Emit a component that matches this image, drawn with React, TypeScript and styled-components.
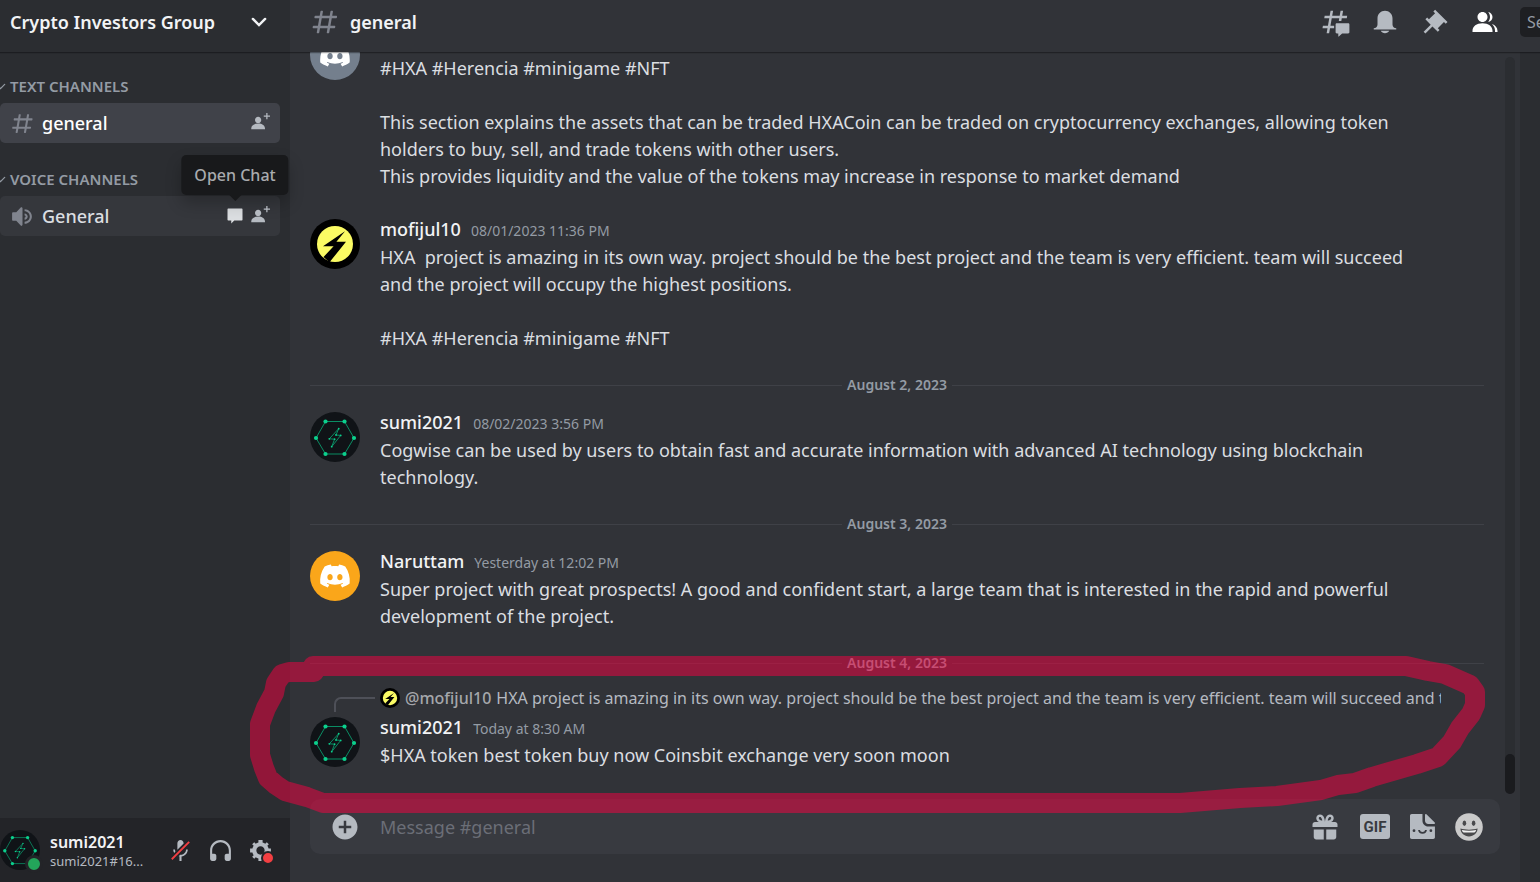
import React from 'react';
import styled, { createGlobalStyle, css } from 'styled-components';

const color = {
  chat: '#313338',
  side: '#2b2d31',
  panel: '#232428',
  dark: '#1e1f22',
  text: '#dbdee1',
  muted: '#949ba4',
  icon: '#b5bac1',
  hash: '#80848e',
  selected: '#404249',
  hover: '#35373c',
  composer: '#383a40',
  line: '#3f4147',
};

const GlobalStyle = createGlobalStyle`
  *, *::before, *::after { box-sizing: border-box; }
  body { margin: 0; background: ${color.chat}; }
  body, button, input { font-family: "Noto Sans", "Open Sans", sans-serif; }
  h1, h2, h3, p, ul, ol { margin: 0; padding: 0; list-style: none; }
  svg { display: block; flex: none; }
`;

/* ---------- icons ---------- */

type IconProps = { size: number; fill?: string };

const Icon = ({ size, fill = 'currentColor', d, box = '0 0 24 24' }: IconProps & { d: string; box?: string }) => (
  <svg width={size} height={size} viewBox={box} fill={fill} aria-hidden="true">
    <path fillRule="evenodd" clipRule="evenodd" d={d} />
  </svg>
);

const paths = {
  hash: 'M5.88657 21C5.57547 21 5.3399 20.7189 5.39427 20.4126L6.00001 17H2.59511C2.28449 17 2.04905 16.7198 2.10259 16.4138L2.27759 15.4138C2.31946 15.1746 2.52722 15 2.77011 15H6.35001L7.41001 9H4.00511C3.69449 9 3.45905 8.71977 3.51259 8.41381L3.68759 7.41381C3.72946 7.17456 3.93722 7 4.18011 7H7.76001L8.39677 3.41262C8.43914 3.17391 8.64664 3 8.88907 3H9.87344C10.1845 3 10.4201 3.28107 10.3657 3.58738L9.76001 7H15.76L16.3968 3.41262C16.4391 3.17391 16.6466 3 16.8891 3H17.8734C18.1845 3 18.4201 3.28107 18.3657 3.58738L17.76 7H21.1649C21.4755 7 21.711 7.28023 21.6574 7.58619L21.4824 8.58619C21.4406 8.82544 21.2328 9 20.9899 9H17.41L16.35 15H19.7549C20.0655 15 20.301 15.2802 20.2474 15.5862L20.0724 16.5862C20.0306 16.8254 19.8228 17 19.5799 17H16L15.3632 20.5874C15.3209 20.8261 15.1134 21 14.8709 21H13.8866C13.5755 21 13.3399 20.7189 13.3943 20.4126L14 17H8.00001L7.36325 20.5874C7.32088 20.8261 7.11337 21 6.87094 21H5.88657ZM9.41045 9L8.35045 15H14.3504L15.4104 9H9.41045Z',
  threads:
    'M5.43309 21C5.35842 21 5.30189 20.9325 5.31494 20.859L6 17H2.14274C2.06819 17 2.01168 16.9327 2.02453 16.8593L2.33253 15.0993C2.34258 15.0419 2.39244 15 2.45074 15H6.35L7.41 9H3.55274C3.47819 9 3.42168 8.93274 3.43453 8.85931L3.74253 7.09931C3.75258 7.04189 3.80244 7 3.86074 7H7.76L8.45234 3.09903C8.46251 3.04174 8.51231 3 8.57049 3H10.3267C10.4014 3 10.4579 3.06746 10.4449 3.14097L9.76 7H15.76L16.4523 3.09903C16.4625 3.04174 16.5123 3 16.5705 3H18.3267C18.4014 3 18.4579 3.06746 18.4449 3.14097L17.76 7H21.6173C21.6918 7 21.7483 7.06725 21.7355 7.14069L21.4275 8.90069C21.4174 8.95811 21.3676 9 21.3093 9H17.41L17.06 11.2H15.02L15.41 9H9.41L8.35 15H11.3V17H8L7.30765 20.901C7.29748 20.9583 7.24768 21 7.1895 21H5.43309ZM13.4399 12.96C12.9097 12.96 12.4799 13.3898 12.4799 13.92V20.2213C12.4799 20.7515 12.9097 21.1813 13.4399 21.1813H14.3999C14.5325 21.1813 14.6399 21.2887 14.6399 21.4213V23.4597C14.6399 23.6677 14.8865 23.7773 15.0408 23.6378L17.4858 21.4289C17.6622 21.2695 17.8916 21.1813 18.1294 21.1813H22.5599C23.0901 21.1813 23.5199 20.7515 23.5199 20.2213V13.92C23.5199 13.3898 23.0901 12.96 22.5599 12.96H13.4399Z',
  bell: 'M18 9V14C18 15.657 19.344 17 21 17V18H3V17C4.656 17 6 15.657 6 14V9C6 5.686 8.686 3 12 3C15.314 3 18 5.686 18 9ZM11.9999 21C10.5239 21 9.24793 20.19 8.55493 19H15.4449C14.7519 20.19 13.4759 21 11.9999 21Z',
  pin: 'M22 12L12.101 2.10101L10.686 3.51401L12.101 4.92901L7.15096 9.87801V9.88001L5.73596 8.46501L4.32196 9.88001L8.56496 14.122L2.90796 19.778L4.32196 21.192L9.97896 15.536L14.222 19.778L15.636 18.364L14.222 16.95L19.171 12H19.172L20.586 13.414L22 12Z',
  members:
    'M14 8.00598C14 10.211 12.206 12.006 10 12.006C7.795 12.006 6 10.211 6 8.00598C6 5.80098 7.794 4.00598 10 4.00598C12.206 4.00598 14 5.80098 14 8.00598ZM2 19.006C2 15.473 5.29 13.006 10 13.006C14.711 13.006 18 15.473 18 19.006V20.006H2V19.006ZM20.0001 20.006H22.0001V19.006C22.0001 16.4433 20.2697 14.4415 17.5213 13.5352C19.0621 14.9127 20.0001 16.8059 20.0001 19.006V20.006ZM14.8834 11.9077C16.6657 11.5044 18.0001 9.9077 18.0001 8.00598C18.0001 5.96916 16.4693 4.28218 14.4971 4.0367C15.4322 5.09511 16.0001 6.48524 16.0001 8.00598C16.0001 9.44888 15.4889 10.7742 14.6378 11.8102C14.7203 11.8418 14.8022 11.8743 14.8834 11.9077Z',
  speaker:
    'M11.383 3.07904C11.009 2.92504 10.579 3.01004 10.293 3.29604L6 8.00204H3C2.45 8.00204 2 8.45304 2 9.00204V15.002C2 15.552 2.45 16.002 3 16.002H6L10.293 20.71C10.579 20.996 11.009 21.082 11.383 20.927C11.757 20.772 12 20.407 12 20.002V4.00204C12 3.59904 11.757 3.23204 11.383 3.07904ZM14 5.00195V7.00195C16.757 7.00195 19 9.24595 19 12.002C19 14.759 16.757 17.002 14 17.002V19.002C17.86 19.002 21 15.863 21 12.002C21 8.14295 17.86 5.00195 14 5.00195ZM14 9.00195C15.654 9.00195 17 10.349 17 12.002C17 13.657 15.654 15.002 14 15.002V13.002C14.551 13.002 15 12.553 15 12.002C15 11.451 14.551 11.002 14 11.002V9.00195Z',
  invite:
    'M14 2H16V3H14V5H13V3H11V2H13V0H14V2ZM6.5 8.00667C7.88 8.00667 9 6.88667 9 5.50667C9 4.12667 7.88 3.00667 6.5 3.00667C5.12 3.00667 4 4.12667 4 5.50667C4 6.88667 5.12 8.00667 6.5 8.00667ZM6.5 8.34C3.26 8.34 1 9.98 1 12.34V13H12V12.34C12 9.98 9.74 8.34 6.5 8.34Z',
  bubble:
    'M3.8 3C3.3 3 3 3.4 3 3.9V16.5C3 17.1 3.4 17.4 3.9 17.4H7.5V21L11.1 17.4H20.1C20.7 17.4 21 17.1 21 16.5V3.9C21 3.4 20.7 3 20.2 3H3.8Z',
  headphones:
    'M12 2.00305C6.486 2.00305 2 6.48805 2 12.0031V20.0031C2 21.1071 2.895 22.0031 4 22.0031H6C7.104 22.0031 8 21.1071 8 20.0031V17.0031C8 15.8991 7.104 15.0031 6 15.0031H4V12.0031C4 7.59105 7.589 4.00305 12 4.00305C16.411 4.00305 20 7.59105 20 12.0031V15.0031H18C16.896 15.0031 16 15.8991 16 17.0031V20.0031C16 21.1071 16.896 22.0031 18 22.0031H20C21.104 22.0031 22 21.1071 22 20.0031V12.0031C22 6.48805 17.514 2.00305 12 2.00305Z',
  gear: 'M19.738 10H22V14H19.739C19.498 14.931 19.1 15.798 18.565 16.564L20 18L18 20L16.565 18.564C15.797 19.099 14.932 19.498 14 19.738V22H10V19.738C9.069 19.498 8.203 19.099 7.436 18.564L6 20L4 18L5.436 16.564C4.901 15.799 4.502 14.932 4.262 14H2V10H4.262C4.502 9.068 4.9 8.202 5.436 7.436L4 6L6 4L7.436 5.436C8.202 4.9 9.068 4.502 10 4.262V2H14V4.261C14.932 4.502 15.797 4.9 16.565 5.435L18 3.999L20 5.999L18.564 7.436C19.099 8.202 19.498 9.069 19.738 10ZM12 16C14.2091 16 16 14.2091 16 12C16 9.79086 14.2091 8 12 8C9.79086 8 8 9.79086 8 12C8 14.2091 9.79086 16 12 16Z',
  gift: 'M16.886 7.999H20C21.104 7.999 22 8.896 22 9.999V11.999H2V9.999C2 8.896 2.897 7.999 4 7.999H7.114C6.663 7.764 6.236 7.477 5.879 7.121C4.709 5.951 4.709 4.048 5.879 2.879C7.012 1.746 8.986 1.746 10.121 2.877C11.758 4.514 11.979 7.595 11.998 7.941L11.99 7.999H12.01L12.002 7.942C12.022 7.596 12.242 4.515 13.879 2.878C15.014 1.745 16.986 1.746 18.121 2.877C19.29 4.049 19.29 5.952 18.121 7.121C17.764 7.477 17.337 7.764 16.886 7.999ZM7.293 5.707C6.903 5.316 6.903 4.682 7.293 4.292C7.481 4.103 7.732 4 8 4C8.268 4 8.519 4.103 8.707 4.292C9.297 4.882 9.641 5.94 9.825 6.822C8.945 6.639 7.879 6.293 7.293 5.707ZM14.174 6.824C14.359 5.941 14.702 4.883 15.293 4.293C15.481 4.103 15.732 4 16 4C16.268 4 16.519 4.103 16.706 4.291C17.096 4.682 17.097 5.316 16.707 5.707C16.116 6.298 15.057 6.642 14.174 6.824ZM3 13.999V19.999C3 21.102 3.897 21.999 5 21.999H11V13.999H3ZM13 13.999V21.999H19C20.104 21.999 21 21.102 21 19.999V13.999H13Z',
  plus: 'M12 2C6.477 2 2 6.477 2 12C2 17.523 6.477 22 12 22C17.523 22 22 17.523 22 12C22 6.477 17.523 2 12 2ZM17 13H13V17H11V13H7V11H11V7H13V11H17V13Z',
  logo: 'M23.0212 1.67671C21.3107 0.879656 19.5079 0.318797 17.6584 0C17.4062 0.461742 17.1749 0.934541 16.9708 1.4184C15.003 1.12145 12.9974 1.12145 11.0283 1.4184C10.819 0.934541 10.589 0.461744 10.3368 0.00546311C8.48074 0.324393 6.67795 0.885118 4.96746 1.68231C1.56727 6.77853 0.649666 11.7538 1.11108 16.652C3.10102 18.1418 5.3262 19.2743 7.69177 20C8.22338 19.2743 8.69519 18.4993 9.09812 17.691C8.32996 17.3997 7.58522 17.0424 6.87684 16.6135C7.06531 16.4762 7.24726 16.3387 7.42403 16.1847C11.5911 18.1749 16.408 18.1749 20.5763 16.1847C20.7531 16.3332 20.9351 16.4762 21.1171 16.6135C20.41 17.0369 19.6639 17.3997 18.897 17.691C19.3052 18.4993 19.7718 19.2689 20.3021 19.9945C22.6677 19.2689 24.8929 18.1364 26.8828 16.6466H26.8893C27.43 10.9731 25.9665 6.04728 23.0212 1.67671ZM9.68041 13.6383C8.39754 13.6383 7.34085 12.4453 7.34085 10.994C7.34085 9.54272 8.37155 8.34973 9.68041 8.34973C10.9893 8.34973 12.0395 9.54272 12.0187 10.994C12.0187 12.4453 10.9828 13.6383 9.68041 13.6383ZM18.3161 13.6383C17.0332 13.6383 15.9765 12.4453 15.9765 10.994C15.9765 9.54272 17.0124 8.34973 18.3161 8.34973C19.6184 8.34973 20.6751 9.54272 20.6543 10.994C20.6543 12.4453 19.6184 13.6383 18.3161 13.6383Z',
};

const Chevron = ({ size, width }: { size: number; width: number }) => (
  <svg width={size} height={size} viewBox="0 0 18 18" fill="none" stroke="currentColor" strokeWidth={width} aria-hidden="true">
    <path d="M4 6.5L9 11.5L14 6.5" strokeLinecap="round" />
  </svg>
);

const MutedMic = () => (
  <svg width="25" height="25" viewBox="0 0 24 24" fill="currentColor" aria-hidden="true">
    <path d="M6.7 11H5C5 12.19 5.34 13.3 5.9 14.28L7.13 13.05C6.86 12.43 6.7 11.74 6.7 11Z" />
    <path d="M9.01 11.085C9.015 11.1125 9.02 11.14 9.02 11.17L15 5.18V5C15 3.34 13.66 2 12 2C10.34 2 9 3.34 9 5V11C9 11.03 9.005 11.0575 9.01 11.085Z" />
    <path d="M11.7237 16.0927L10.9632 16.8531L10.2533 17.5688C10.4978 17.633 10.747 17.6839 11 17.72V22H13V17.72C16.28 17.23 19 14.41 19 11H17.3C17.3 14 14.76 16.1 12 16.1C11.9076 16.1 11.8155 16.0975 11.7237 16.0927Z" />
    <path fill="#f23f42" d="M21 4.27L19.73 3L3 19.73L4.27 21L8.46 16.82L9.69 15.58L11.35 13.92L14.99 10.28L21 4.27Z" />
  </svg>
);

const Sticker = () => (
  <svg width="25" height="25" viewBox="0 0 20 20" fill="currentColor" aria-hidden="true">
    <path d="M12 0.663V5.402C12 6.84 13.16 8 14.6 8H19.34C19.92 8 20.22 7.296 19.8 6.88L13.12 0.197C12.7 -0.22 12 0.078 12 0.663Z" />
    <path d="M14.576 10.028C12.034 10.028 9.97 7.964 9.97 5.422V0.058H1.4C0.6 0.058 0 0.65 0 1.45V18.6C0 19.4 0.6 20 1.4 20H18.55C19.35 20 19.94 19.4 19.94 18.6V10.028H14.576Z" />
    <circle cx="3.2" cy="13.3" r="1.1" fill={color.composer} />
    <circle cx="16.7" cy="13.3" r="1.1" fill={color.composer} />
    <path d="M7.2 12.8C7.6 15.8 12.4 15.8 12.8 12.8" fill="none" stroke={color.composer} strokeWidth="1.5" />
  </svg>
);

const Emoji = () => (
  <svg width="28" height="28" viewBox="0 0 28 28" aria-hidden="true">
    <circle cx="14" cy="14" r="13.8" fill="#cacaca" />
    <ellipse cx="9.4" cy="10.3" rx="1.8" ry="2.8" fill="#4a4a4c" />
    <ellipse cx="18.6" cy="10.3" rx="1.8" ry="2.8" fill="#4a4a4c" />
    <path d="M5.4 15.6C10.5 17 17.5 17 22.6 15.6C22.4 20.4 18.6 23.4 14 23.4C9.4 23.4 5.6 20.4 5.4 15.6Z" fill="#4a4a4c" />
    <path d="M6.8 17C11.5 18 16.5 18 21.2 17C20.8 18.6 20 19.4 19.2 19.6H8.8C8 19.4 7.2 18.6 6.8 17Z" fill="#f0f0f0" />
  </svg>
);

/* ---------- avatars ---------- */

const DiscordAvatar = ({ bg }: { bg: string }) => (
  <svg width="50" height="50" viewBox="0 0 50 50" aria-hidden="true">
    <circle cx="25" cy="25" r="25" fill={bg} />
    <path transform="translate(9 13.6) scale(1.14)" fill="#fff" fillRule="evenodd" d={paths.logo} />
  </svg>
);

const BoltAvatar = ({ size }: { size: number }) => (
  <svg width={size} height={size} viewBox="0 0 50 50" aria-hidden="true">
    <circle cx="25" cy="25" r="25" fill="#000" />
    <circle cx="25" cy="25" r="18" fill="#fbfb64" />
    <path d="M35 12.3L13 27.3H23.6L13.5 38L19.5 43.3L36 22.8H26.4Z" fill="#000" />
  </svg>
);

const hexagon: [number, number][] = [[15.5, 9.5], [34.5, 9.5], [44, 26], [34.5, 42], [15.5, 42], [6, 26]];
const bolt: [number, number][] = [[28.7, 16.7], [19.3, 26.8], [24.6, 27.2], [21.7, 34.7], [30.7, 23.4], [26, 23]];

const HexAvatar = ({ size }: { size: number }) => (
  <svg width={size} height={size} viewBox="0 0 50 50" aria-hidden="true">
    <circle cx="25" cy="25" r="25" fill="#101317" />
    <g fill="none" stroke="#0a9a6c" strokeWidth="0.9">
      <polygon points={hexagon.join(' ')} />
      <polygon points={bolt.join(' ')} />
    </g>
    <g fill="#0bd08d">
      {hexagon.map(([x, y]) => <circle key={`${x}-${y}`} cx={x} cy={y} r="2.1" />)}
      {bolt.map(([x, y]) => <circle key={`${x}-${y}`} cx={x} cy={y} r="0.9" />)}
    </g>
  </svg>
);

/* ---------- page frame ---------- */

const Page = styled.div`
  position: relative;
  display: flex;
  height: 100vh;
  overflow: hidden;
  background: ${color.chat};
  color: ${color.text};
`;

const bar = css`
  position: relative;
  z-index: 1;
  flex: none;
  display: flex;
  align-items: center;
  height: 52px;
  padding-bottom: 8px;
  box-shadow: 0 1px 0 rgba(4, 4, 5, 0.3), 0 2px 0 rgba(4, 4, 5, 0.08);
`;

const IconButton = styled.button<{ $active?: boolean }>`
  position: relative;
  display: flex;
  flex: none;
  padding: 0;
  border: 0;
  background: none;
  color: ${p => (p.$active ? '#fff' : color.icon)};
  cursor: pointer;
`;

/* ---------- sidebar ---------- */

const Sidebar = styled.nav`
  display: flex;
  flex: none;
  flex-direction: column;
  width: 290px;
  background: ${color.side};
`;

const ServerButton = styled.button`
  ${bar}
  justify-content: space-between;
  padding: 0 20px 8px 10px;
  border: 0;
  background: ${color.side};
  color: #f2f3f5;
  font-size: 18px;
  font-weight: 600;
  cursor: pointer;
`;

const Channels = styled.div`
  flex: 1;
  padding: 24px 10px 0 0;
`;

const Category = styled.section`
  margin-bottom: 26px;
`;

const CategoryTitle = styled.h2`
  display: flex;
  align-items: center;
  gap: 2px;
  height: 20px;
  margin: 0 0 7px -7px;
  color: ${color.muted};
  font-size: 15px;
  font-weight: 600;
`;

const Channel = styled.div<{ $selected?: boolean }>`
  display: flex;
  align-items: center;
  gap: 5px;
  height: 40px;
  padding: 0 10px;
  border-radius: 5px;
  background: ${p => (p.$selected ? color.selected : color.hover)};
`;

const ChannelLink = styled.a<{ $selected?: boolean }>`
  display: flex;
  flex: 1;
  align-items: center;
  gap: 7px;
  color: ${p => (p.$selected ? '#fff' : color.text)};
  font-size: 18px;
  font-weight: 500;
  text-decoration: none;
  svg { color: ${color.hash}; }
`;

const Tooltip = styled.span`
  position: absolute;
  bottom: 31px;
  left: 50%;
  display: flex;
  align-items: center;
  height: 40px;
  padding: 0 13px;
  border-radius: 5px;
  background: #18191b;
  box-shadow: 0 8px 16px rgba(0, 0, 0, 0.24);
  color: #a9abae;
  font-size: 16px;
  font-weight: 500;
  white-space: nowrap;
  transform: translateX(-50%);
  &::after {
    content: '';
    position: absolute;
    top: 100%;
    left: 50%;
    margin-left: -6px;
    border: 6px solid transparent;
    border-top-color: #18191b;
    border-bottom: 0;
  }
`;

const UserPanel = styled.footer`
  display: flex;
  align-items: center;
  height: 64px;
  padding: 0 17px 0 0;
  background: ${color.panel};
`;

const UserAvatar = styled.div`
  position: relative;
  margin-right: 10px;
`;

const Status = styled.span`
  position: absolute;
  right: -3px;
  bottom: -3px;
  width: 18px;
  height: 18px;
  border: 3px solid ${color.panel};
  border-radius: 50%;
  background: #23a55a;
`;

const UserNames = styled.div`
  flex: 1;
  min-width: 0;
  padding-top: 2px;
`;

const UserName = styled.p`
  color: #f2f3f5;
  font-size: 16px;
  font-weight: 600;
  line-height: 20px;
`;

const UserTag = styled.p`
  color: ${color.icon};
  font-size: 13px;
  line-height: 18px;
`;

const UserActions = styled.div`
  display: flex;
  gap: 15px;
`;

const AlertDot = styled.span`
  position: absolute;
  right: -2px;
  bottom: -2px;
  width: 14px;
  height: 14px;
  border: 2px solid ${color.panel};
  border-radius: 50%;
  background: #f23f42;
`;

/* ---------- main column ---------- */

const Main = styled.main`
  display: flex;
  flex: 1;
  flex-direction: column;
  min-width: 0;
`;

const TopBar = styled.header`
  ${bar}
  padding-left: 20px;
  background: ${color.chat};
`;

const ChannelTitle = styled.h1`
  display: flex;
  flex: 1;
  align-items: center;
  gap: 10px;
  color: #f2f3f5;
  font-size: 18px;
  font-weight: 600;
  svg { color: ${color.hash}; }
`;

const Tools = styled.div`
  display: flex;
  gap: 20px;
`;

const SearchSlot = styled.div`
  width: 20px;
  margin-left: 20px;
`;

const SearchInput = styled.input`
  display: block;
  width: 180px;
  height: 30px;
  padding: 0 7px;
  border: 0;
  border-radius: 5px;
  background: ${color.dark};
  color: ${color.text};
  font-size: 16px;
  &::placeholder { color: ${color.muted}; opacity: 1; }
`;

const Body = styled.div`
  display: flex;
  flex: 1;
  min-height: 0;
`;

const Chat = styled.section`
  display: flex;
  flex: 1;
  flex-direction: column;
  min-width: 0;
  padding-bottom: 28px;
`;

const MembersEdge = styled.aside`
  flex: none;
  width: 20px;
  background: ${color.side};
`;

const Scroller = styled.div`
  display: flex;
  flex: 1;
  min-height: 0;
  padding-right: 5px;
  overflow: hidden;
`;

const Messages = styled.ol`
  display: flex;
  flex: 1;
  flex-direction: column;
  justify-content: flex-end;
  min-width: 0;
  padding: 0 21px 30px 20px;
`;

const ScrollTrack = styled.div`
  display: flex;
  flex: none;
  flex-direction: column;
  justify-content: flex-end;
  width: 10px;
  margin: 5px 0;
  border-radius: 5px;
  background: ${color.side};
`;

const ScrollThumb = styled.div`
  height: 40px;
  border-radius: 5px;
  background: #1a1b1e;
`;

const Item = styled.li<{ $gap?: boolean }>`
  flex: none;
  margin-bottom: ${p => (p.$gap ? '26px' : '0')};
`;

const Row = styled.div`
  display: flex;
  gap: 20px;
`;

const AvatarSlot = styled.div`
  flex: none;
  padding-top: 3px;
`;

const Content = styled.div`
  flex: 1;
  min-width: 0;
  padding-right: 54px;
`;

const MessageHead = styled.div`
  display: flex;
  align-items: baseline;
  gap: 10px;
  height: 28px;
  line-height: 27px;
`;

const Author = styled.h3`
  color: #f2f3f5;
  font-size: 18px;
  font-weight: 500;
`;

const Time = styled.time`
  color: ${color.muted};
  font-size: 14px;
`;

const Text = styled.p`
  font-size: 18px;
  line-height: 27px;
  white-space: pre-wrap;
`;

const DayDivider = styled.li`
  display: flex;
  flex: none;
  align-items: center;
  gap: 5px;
  margin: 24px 0 15px;
  color: ${color.muted};
  font-size: 14px;
  font-weight: 600;
  line-height: 18px;
  &::before, &::after {
    content: '';
    flex: 1;
    height: 1px;
    background: ${color.line};
  }
`;

const Reply = styled.div`
  display: flex;
  align-items: center;
  gap: 5px;
  height: 22px;
  margin: 0 43px 5px 24px;
  color: ${color.icon};
  font-size: 16px;
  line-height: 22px;
  white-space: nowrap;
`;

const ReplySpine = styled.span`
  flex: none;
  align-self: flex-start;
  width: 41px;
  height: 15px;
  margin-top: 10px;
  border: solid #4e5058;
  border-width: 2px 0 0 2px;
  border-top-left-radius: 7px;
`;

const ReplyAuthor = styled.span`
  color: #a5a7ab;
  font-weight: 500;
`;

const ReplyText = styled.span`
  flex: 1;
  min-width: 0;
  overflow: hidden;
`;

const Composer = styled.form`
  display: flex;
  flex: none;
  align-items: center;
  gap: 20px;
  height: 55px;
  margin: 0 20px;
  padding: 0 17px 0 20px;
  border-radius: 10px;
  background: ${color.composer};
`;

const MessageInput = styled.input`
  flex: 1;
  min-width: 0;
  height: 30px;
  padding: 0;
  border: 0;
  outline: 0;
  background: none;
  color: ${color.text};
  font-size: 18px;
  &::placeholder { color: #6b6e77; opacity: 1; }
`;

const GifButton = styled(IconButton)`
  align-items: center;
  justify-content: center;
  width: 30px;
  height: 25px;
  border-radius: 3px;
  background: ${color.icon};
  color: ${color.composer};
  font-family: Roboto, sans-serif;
  font-size: 15px;
  font-weight: 700;
`;

const Marker = styled.svg`
  position: absolute;
  top: 0;
  left: 0;
  z-index: 2;
  width: 100%;
  height: 100%;
  pointer-events: none;
`;

const loop =
  'M314 672H289L282 674L276 683L274 693L266 708L260 724V755L264 768L268 778L276 785L285 791L307 797L323 803H1180L1240 798L1277 796L1299 793L1321 790L1338 785L1355 783L1372 777L1417 764L1438 757L1452 742L1460 728L1471 714L1475 705V692L1470 685L1445 674L1428 671L1406 666H313';

type MessageProps = {
  avatar: React.ReactNode;
  author?: string;
  time?: string;
  gap?: boolean;
  reply?: React.ReactNode;
  children: string;
};

const Message = ({ avatar, author, time, gap, reply, children }: MessageProps) => (
  <Item $gap={gap}>
    {reply}
    <Row>
      <AvatarSlot>{avatar}</AvatarSlot>
      <Content>
        <MessageHead>
          {author && <Author>{author}</Author>}
          {time && <Time>{time}</Time>}
        </MessageHead>
        <Text>{children}</Text>
      </Content>
    </Row>
  </Item>
);

export default function App() {
  return (
    <Page>
      <GlobalStyle />
      <Sidebar>
        <ServerButton type="button">
          Crypto Investors Group
          <Chevron size={22} width={2} />
        </ServerButton>
        <Channels>
          <Category>
            <CategoryTitle>
              <Chevron size={15} width={1.5} />
              TEXT CHANNELS
            </CategoryTitle>
            <Channel $selected>
              <ChannelLink href="#general" $selected>
                <Icon size={25} d={paths.hash} />
                general
              </ChannelLink>
              <IconButton type="button" aria-label="Create invite">
                <Icon size={20} box="0 0 16 16" d={paths.invite} />
              </IconButton>
            </Channel>
          </Category>
          <Category>
            <CategoryTitle>
              <Chevron size={15} width={1.5} />
              VOICE CHANNELS
            </CategoryTitle>
            <Channel>
              <ChannelLink href="#voice-general">
                <Icon size={25} d={paths.speaker} />
                General
              </ChannelLink>
              <IconButton type="button" aria-describedby="open-chat">
                <Icon size={20} fill={color.text} d={paths.bubble} />
                <Tooltip role="tooltip" id="open-chat">Open Chat</Tooltip>
              </IconButton>
              <IconButton type="button" aria-label="Create invite">
                <Icon size={20} box="0 0 16 16" d={paths.invite} />
              </IconButton>
            </Channel>
          </Category>
        </Channels>
        <UserPanel>
          <UserAvatar>
            <HexAvatar size={40} />
            <Status />
          </UserAvatar>
          <UserNames>
            <UserName>sumi2021</UserName>
            <UserTag>sumi2021#16...</UserTag>
          </UserNames>
          <UserActions>
            <IconButton type="button" aria-label="Unmute"><MutedMic /></IconButton>
            <IconButton type="button" aria-label="Deafen"><Icon size={25} d={paths.headphones} /></IconButton>
            <IconButton type="button" aria-label="User settings">
              <Icon size={25} d={paths.gear} />
              <AlertDot />
            </IconButton>
          </UserActions>
        </UserPanel>
      </Sidebar>

      <Main>
        <TopBar>
          <ChannelTitle>
            <Icon size={30} d={paths.hash} />
            general
          </ChannelTitle>
          <Tools>
            <IconButton type="button" aria-label="Threads"><Icon size={30} d={paths.threads} /></IconButton>
            <IconButton type="button" aria-label="Notification settings"><Icon size={30} d={paths.bell} /></IconButton>
            <IconButton type="button" aria-label="Pinned messages"><Icon size={30} d={paths.pin} /></IconButton>
            <IconButton type="button" aria-label="Member list" $active><Icon size={30} d={paths.members} /></IconButton>
          </Tools>
          <SearchSlot>
            <SearchInput type="text" placeholder="Search" aria-label="Search" />
          </SearchSlot>
        </TopBar>
        <Body>
          <Chat>
            <Scroller>
              <Messages>
                <Message avatar={<DiscordAvatar bg="#747f8d" />} gap>
                  {'#HXA #Herencia #minigame #NFT\n\nThis section explains the assets that can be traded HXACoin can be traded on cryptocurrency exchanges, allowing token holders to buy, sell, and trade tokens with other users.\nThis provides liquidity and the value of the tokens may increase in response to market demand'}
                </Message>
                <Message avatar={<BoltAvatar size={50} />} author="mofijul10" time="08/01/2023 11:36 PM">
                  {'HXA  project is amazing in its own way. project should be the best project and the team is very efficient. team will succeed and the project will occupy the highest positions.\n\n#HXA #Herencia #minigame #NFT'}
                </Message>
                <DayDivider>August 2, 2023</DayDivider>
                <Message avatar={<HexAvatar size={50} />} author="sumi2021" time="08/02/2023 3:56 PM">
                  Cogwise can be used by users to obtain fast and accurate information with advanced AI technology using blockchain technology.
                </Message>
                <DayDivider>August 3, 2023</DayDivider>
                <Message avatar={<DiscordAvatar bg="#faa61a" />} author="Naruttam" time="Yesterday at 12:02 PM">
                  Super project with great prospects! A good and confident start, a large team that is interested in the rapid and powerful development of the project.
                </Message>
                <DayDivider>August 4, 2023</DayDivider>
                <Message
                  avatar={<HexAvatar size={50} />}
                  author="sumi2021"
                  time="Today at 8:30 AM"
                  reply={
                    <Reply>
                      <ReplySpine />
                      <BoltAvatar size={20} />
                      <ReplyAuthor>@mofijul10</ReplyAuthor>
                      <ReplyText>
                        HXA project is amazing in its own way. project should be the best project and the team is very efficient. team will succeed and the
                      </ReplyText>
                    </Reply>
                  }
                >
                  $HXA token best token buy now Coinsbit exchange very soon moon
                </Message>
              </Messages>
              <ScrollTrack><ScrollThumb /></ScrollTrack>
            </Scroller>
            <Composer>
              <IconButton type="button" aria-label="Attach"><Icon size={30} d={paths.plus} /></IconButton>
              <MessageInput type="text" placeholder="Message #general" aria-label="Message #general" />
              <IconButton type="button" aria-label="Send a gift"><Icon size={30} d={paths.gift} /></IconButton>
              <GifButton type="button">GIF</GifButton>
              <IconButton type="button" aria-label="Stickers"><Sticker /></IconButton>
              <IconButton type="button" aria-label="Emoji"><Emoji /></IconButton>
            </Composer>
          </Chat>
          <MembersEdge />
        </Body>
      </Main>

      <Marker aria-hidden="true">
        <path d={loop} fill="none" stroke="rgb(250, 0, 66)" strokeOpacity="0.5" strokeWidth="20" strokeLinecap="round" strokeLinejoin="round" />
      </Marker>
    </Page>
  );
}
